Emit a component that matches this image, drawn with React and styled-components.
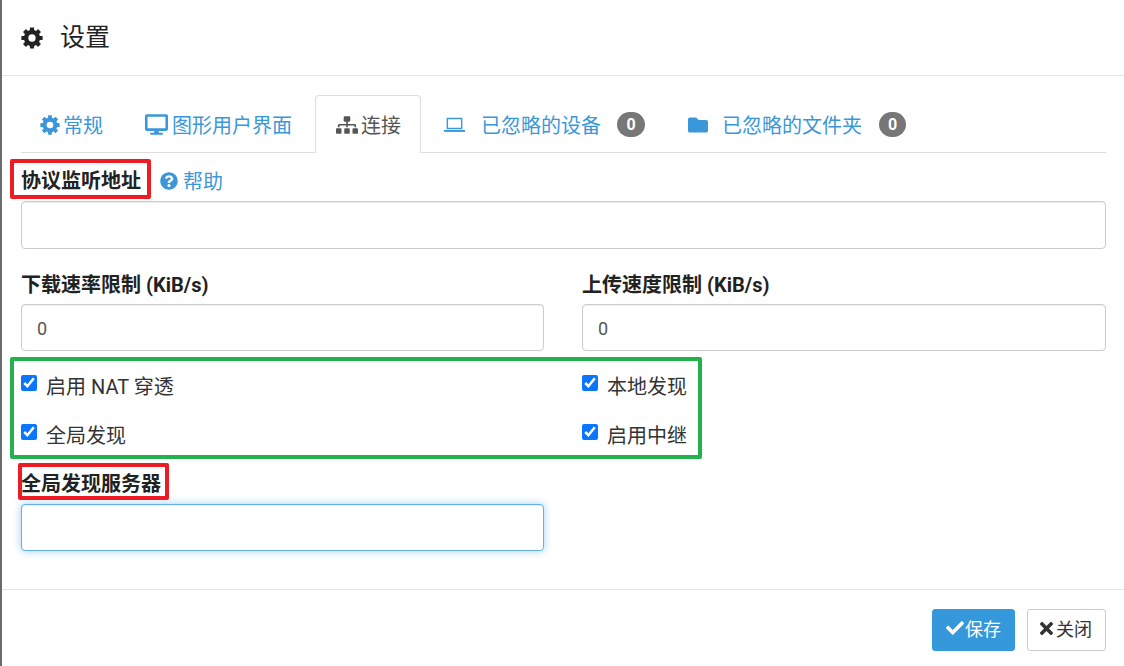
import React from 'react';
import styled, { createGlobalStyle } from 'styled-components';
import { FaDesktop, FaSitemap, FaFolder, FaQuestionCircle, FaCheck, FaTimes } from 'react-icons/fa';

const Global = createGlobalStyle`
	html, body {
		margin: 0;
		padding: 0;
		background: #fff;
	}
	* {
		box-sizing: border-box;
	}
`;

const Modal = styled.div`
	width: 1124px;
	height: 666px;
	overflow: hidden;
	position: relative;
	display: flex;
	flex-direction: column;
	border-left: 2px solid #6b6b6b;
	background: #fff;
	color: #333;
	font-family: Roboto, "Noto Sans CJK SC", sans-serif;
	font-size: 20px;
`;

const Header = styled.div`
	height: 76px;
	flex: none;
	display: flex;
	align-items: center;
	gap: 17px;
	padding: 0 0 0 19px;
	border-bottom: 1px solid #e5e5e5;
	color: #222;
	svg {
		width: 22px;
		height: 22px;
	}
`;

const Title = styled.h4`
	margin: 1px 0 0;
	font-size: 25px;
	font-weight: 400;
	line-height: 32px;
`;

const Body = styled.div`
	flex: 1;
	padding: 19px 18px 0 19px;
`;

const Tabs = styled.ul`
	list-style: none;
	display: flex;
	height: 58px;
	margin: 0;
	padding: 0;
	border-bottom: 1px solid #ddd;
`;

const Tab = styled.li`
	display: flex;
	align-items: center;
	height: ${p => (p.$active ? '58px' : '57px')};
	padding: 1px ${p => p.$right || p.$pad || 18}px 0 ${p => p.$pad || 18}px;
	color: ${p => (p.$active ? '#555' : '#3a97da')};
	background: #fff;
	border: ${p => (p.$active ? '1px solid #ddd' : '1px solid transparent')};
	border-bottom: ${p => (p.$active ? '1px solid #fff' : '0')};
	border-radius: 4px 4px 0 0;
	white-space: nowrap;
`;

const TabIcon = styled.span`
	display: flex;
	align-items: center;
	margin-right: ${p => p.$gap || 4}px;
	svg {
		width: ${p => p.$size || 20}px;
		height: ${p => p.$size || 20}px;
	}
`;

const Badge = styled.span`
	display: flex;
	align-items: center;
	justify-content: center;
	width: ${p => p.$w || 28}px;
	height: 25px;
	margin-left: ${p => p.$gap || 16}px;
	border-radius: 13px;
	background: #777;
	color: #fff;
	font-size: 16px;
	font-weight: 700;
`;

const Row = styled.div`
	display: grid;
	grid-template-columns: 523px 524px;
	column-gap: 38px;
`;

const Field = styled.div`
	display: flex;
	flex-direction: column;
	margin-top: ${p => p.$top || 0}px;
`;

const LabelRow = styled.div`
	display: flex;
	align-items: center;
	height: 48px;
	padding-top: 8px;
`;

const Label = styled.label`
	display: block;
	font-size: 20px;
	font-weight: 700;
	line-height: 28px;
	color: #222;
	margin-bottom: ${p => p.$mb ?? 5}px;
`;

const Help = styled.span`
	display: flex;
	align-items: center;
	gap: 5px;
	margin: 0 0 1px 19px;
	color: #3a97da;
	svg {
		width: 18px;
		height: 18px;
	}
`;

const Input = styled.input`
	display: block;
	width: 100%;
	height: ${p => p.$h || 47}px;
	padding: 7px 15px 5px;
	font: inherit;
	font-size: 18px;
	color: #555;
	background: #fff;
	border: 1px solid ${p => (p.$focus ? '#66afe9' : '#ccc')};
	border-radius: 4px;
	outline: none;
	box-shadow: ${p =>
		p.$focus
			? 'inset 0 1px 1px rgba(0,0,0,.075), 0 0 8px rgba(102,175,233,.6)'
			: 'inset 0 1px 1px rgba(0,0,0,.075)'};
`;

const Checks = styled(Row)`
	margin-top: 14px;
	row-gap: 0;
`;

const Check = styled.label`
	display: flex;
	align-items: flex-start;
	height: 49px;
	padding-top: 8px;
	gap: 9px;
	font-size: 20px;
	line-height: 28px;
	color: #333;
	input {
		width: 16px;
		height: 16px;
		margin: 2px 0 0;
		accent-color: #0a75ff;
	}
`;

const Footer = styled.div`
	height: 77px;
	flex: none;
	display: flex;
	justify-content: flex-end;
	align-items: flex-start;
	gap: 12px;
	padding: 19px 18px 0 0;
	border-top: 1px solid #e5e5e5;
`;

const Button = styled.button`
	display: flex;
	align-items: center;
	gap: ${p => p.$gap}px;
	height: 42px;
	width: ${p => p.$w}px;
	padding: 0 0 4px ${p => p.$left}px;
	font: inherit;
	font-size: 18px;
	color: ${p => (p.$primary ? '#fff' : '#333')};
	background: ${p => (p.$primary ? '#3498db' : '#fff')};
	border: 1px solid ${p => (p.$primary ? '#3498db' : '#ccc')};
	border-radius: 3px;
	svg {
		width: ${p => p.$icon}px;
		height: ${p => p.$icon}px;
	}
`;

// hand drawn marks over the screenshot
const Mark = styled.div`
	position: absolute;
	left: ${p => p.$x}px;
	top: ${p => p.$y}px;
	width: ${p => p.$w}px;
	height: ${p => p.$h}px;
	border: 4px solid ${p => p.$color};
	border-radius: 2px;
	pointer-events: none;
`;

const LaptopIcon = () => (
	<svg viewBox="0 0 22 20" fill="none" stroke="currentColor" strokeWidth="1.5">
		<path d="M3.5 3.75h15v10.5h-15z" />
		<path d="M0 16.75h22" strokeWidth="2" />
	</svg>
);

// eight square teeth, the font awesome 4 cog
const gearPath = (() => {
	let d = '';
	const pt = (r, deg) => {
		const a = (deg * Math.PI) / 180;
		return `${(12 + r * Math.cos(a)).toFixed(2)} ${(12 + r * Math.sin(a)).toFixed(2)}`;
	};
	for (let i = 0; i < 8; i++) {
		const c = i * 45 - 90;
		d += `${i ? 'L' : 'M'}${pt(8.9, c - 15)}L${pt(11.8, c - 11)}L${pt(11.8, c + 11)}L${pt(8.9, c + 15)}`;
	}
	return `${d}ZM12 8a4 4 0 1 0 0 8a4 4 0 1 0 0-8Z`;
})();

const GearIcon = () => (
	<svg viewBox="0 0 24 24" fill="currentColor" fillRule="evenodd">
		<path d={gearPath} />
	</svg>
);

const App = () => {
	return (
		<Modal>
			<Global />
			<Header>
				<GearIcon />
				<Title>设置</Title>
			</Header>
			<Body>
				<Tabs>
					<Tab>
						<TabIcon $gap={3}><GearIcon /></TabIcon>常规
					</Tab>
					<Tab $pad={22}>
						<TabIcon $size={23}><FaDesktop /></TabIcon>图形用户界面
					</Tab>
					<Tab $active $pad={20} $right={19}>
						<TabIcon $size={22} $gap={3}><FaSitemap /></TabIcon>连接
					</Tab>
					<Tab $pad={22}>
						<TabIcon $size={21} $gap={16}><LaptopIcon /></TabIcon>已忽略的设备<Badge>0</Badge>
					</Tab>
					<Tab $pad={19}>
						<TabIcon $size={20} $gap={14}><FaFolder /></TabIcon>已忽略的文件夹<Badge $w={27} $gap={17}>0</Badge>
					</Tab>
				</Tabs>
				<LabelRow>
					<Label as="span" $mb={0}>协议监听地址</Label>
					<Help><FaQuestionCircle />帮助</Help>
				</LabelRow>
				<Input $h={48} />
				<Row>
					<Field $top={22}>
						<Label>下载速率限制 (KiB/s)</Label>
						<Input defaultValue="0" />
					</Field>
					<Field $top={22}>
						<Label>上传速度限制 (KiB/s)</Label>
						<Input defaultValue="0" />
					</Field>
				</Row>
				<Checks>
					<Check><input type="checkbox" defaultChecked />启用 NAT 穿透</Check>
					<Check><input type="checkbox" defaultChecked />本地发现</Check>
					<Check><input type="checkbox" defaultChecked />全局发现</Check>
					<Check><input type="checkbox" defaultChecked />启用中继</Check>
				</Checks>
				<Row>
					<Field $top={7}>
						<Label $mb={6}>全局发现服务器</Label>
						<Input $focus />
					</Field>
				</Row>
			</Body>
			<Footer>
				<Button $primary $w={83} $left={13} $gap={1} $icon={18}><FaCheck />保存</Button>
				<Button $w={79} $left={9} $gap={0} $icon={19}><FaTimes />关闭</Button>
			</Footer>
			<Mark $color="#ed1c24" $x={8} $y={159} $w={141} $h={40} />
			<Mark $color="#ed1c24" $x={16} $y={463} $w={151} $h={37} />
			<Mark $color="#22b14c" $x={8} $y={357} $w={692} $h={102} />
		</Modal>
	);
};

export default App;
